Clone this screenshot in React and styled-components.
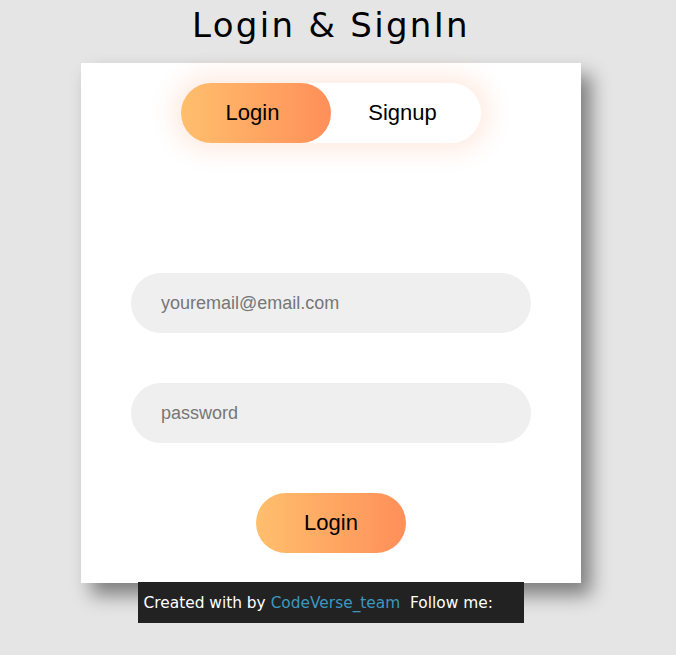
import React from "react";
import styled, { createGlobalStyle } from "styled-components";

const Global = createGlobalStyle`
  html, body { margin: 0; padding: 0; }
  body {
    background: #e5e5e5;
    font-family: "Liberation Sans", Arial, sans-serif;
  }
`;

const Page = styled.div`
  display: flex;
  flex-direction: column;
  align-items: center;
  width: 676px;
  min-height: 655px;
  padding-top: 2px;
  box-sizing: border-box;
`;

const Title = styled.h1`
  margin: 0 0 0 -14px;
  font-family: "DejaVu Sans", Verdana, sans-serif;
  font-weight: normal;
  font-size: 34px;
  letter-spacing: 2.3px;
  line-height: 46px;
  height: 61px;
  color: #000;
`;

const Card = styled.div`
  width: 500px;
  height: 520px;
  margin-left: -14px;
  background: #fff;
  box-shadow: 10px 12px 18px rgba(0, 0, 0, 0.45);
  display: flex;
  flex-direction: column;
  align-items: center;
  padding-top: 20px;
  box-sizing: border-box;
`;

const Toggle = styled.div`
  width: 300px;
  height: 60px;
  border-radius: 30px;
  display: flex;
  box-shadow: 0 0 22px 10px rgba(255, 110, 40, 0.12);
  background: #fff;
`;

const ToggleButton = styled.button`
  width: 150px;
  height: 60px;
  border: none;
  border-radius: 30px;
  padding: 0 7px 0 0;
  font-family: "Liberation Sans", Arial, sans-serif;
  font-size: 22px;
  color: #000;
  cursor: pointer;
  background: ${(p) =>
    p.$active ? "linear-gradient(to right, #ffbf6d, #ff8f59)" : "transparent"};
`;

const Form = styled.form`
  display: flex;
  flex-direction: column;
  align-items: center;
  gap: 50px;
  margin-top: 130px;
`;

const Input = styled.input`
  width: 400px;
  height: 60px;
  border: none;
  outline: none;
  border-radius: 30px;
  background: #efefef;
  padding: 0 30px;
  box-sizing: border-box;
  font-family: "Liberation Sans", Arial, sans-serif;
  font-size: 18px;
  color: #333;
  &::placeholder { color: #767676; }
`;

const Submit = styled.button`
  width: 150px;
  height: 60px;
  border: none;
  border-radius: 30px;
  padding: 0;
  font-family: "Liberation Sans", Arial, sans-serif;
  font-size: 22px;
  color: #000;
  background: linear-gradient(to right, #ffbf6d, #ff8f59);
  cursor: pointer;
`;

const Footer = styled.div`
  width: 386px;
  height: 41px;
  margin-top: -1px;
  margin-left: -15px;
  background: #222;
  color: #fff;
  font-family: "DejaVu Sans", sans-serif;
  font-size: 15.4px;
  display: flex;
  align-items: center;
  padding-left: 6px;
  box-sizing: border-box;
  position: relative;
`;

const FooterText = styled.span`
  white-space: pre;
`;

const Link = styled.a`
  color: #3c97bf;
  text-decoration: none;
`;

export default function App() {
  return (
    <>
      <Global />
      <Page>
        <Title>Login &amp; SignIn</Title>
        <Card>
          <Toggle>
            <ToggleButton $active type="button">Login</ToggleButton>
            <ToggleButton type="button">Signup</ToggleButton>
          </Toggle>
          <Form onSubmit={(e) => e.preventDefault()}>
            <Input type="email" placeholder="youremail@email.com" />
            <Input type="password" placeholder="password" />
            <Submit type="submit">Login</Submit>
          </Form>
        </Card>
        <Footer>
          <FooterText>
            Created with by <Link href="#">CodeVerse_team</Link>{"  "}Follow me:
          </FooterText>
        </Footer>
      </Page>
    </>
  );
}
